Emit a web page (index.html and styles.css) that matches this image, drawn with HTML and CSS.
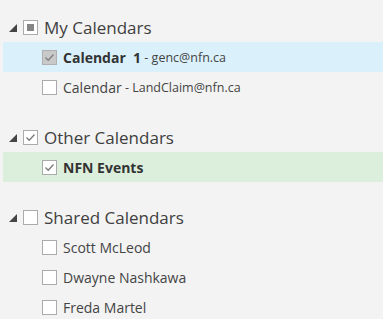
FILE: index.html
```html
<!DOCTYPE html>
<html lang="en">
  <head>
    <meta charset="UTF-8" />
    <title>Calendars</title>
    <link rel="stylesheet" href="styles.css">
  </head>
  <body>
    <div class="tree">
      <div class="section">
        <div class="header">
          <span class="arrow"></span>
          <span class="box partial"><span class="dot"></span></span>
          <span class="title">My Calendars</span>
        </div>
        <div class="item selected">
          <span class="box checked gray">
            <svg viewBox="0 0 13 13"><path d="M2.5 6.5 L5.2 9.3 L10.5 3.5" /></svg>
          </span>
          <span class="name bold">Calendar&nbsp; 1</span>
          <span class="mail">&nbsp;- genc@nfn.ca</span>
        </div>
        <div class="item">
          <span class="box"></span>
          <span class="name">Calendar</span>
          <span class="mail">&nbsp;- LandClaim@nfn.ca</span>
        </div>
      </div>

      <div class="section">
        <div class="header">
          <span class="arrow"></span>
          <span class="box checked">
            <svg viewBox="0 0 13 13"><path d="M2.5 6.5 L5.2 9.3 L10.5 3.5" /></svg>
          </span>
          <span class="title">Other Calendars</span>
        </div>
        <div class="item green">
          <span class="box checked">
            <svg viewBox="0 0 13 13"><path d="M2.5 6.5 L5.2 9.3 L10.5 3.5" /></svg>
          </span>
          <span class="name bold">NFN Events</span>
        </div>
      </div>

      <div class="section">
        <div class="header">
          <span class="arrow"></span>
          <span class="box"></span>
          <span class="title">Shared Calendars</span>
        </div>
        <div class="item">
          <span class="box"></span>
          <span class="name">Scott McLeod</span>
        </div>
        <div class="item">
          <span class="box"></span>
          <span class="name">Dwayne Nashkawa</span>
        </div>
        <div class="item">
          <span class="box"></span>
          <span class="name">Freda Martel</span>
        </div>
      </div>
    </div>
  </body>
</html>
```

FILE: styles.css
```css
body {
  margin: 0;
  padding: 0;
  background-color: #f3f3f3;
  font-family: "Open Sans", "Noto Sans", sans-serif;
  color: #444;
}

.tree {
  padding-top: 12px;
  display: flex;
  flex-direction: column;
  gap: 20px;
}

.header,
.item {
  height: 30px;
  display: flex;
  align-items: center;
}

.header {
  padding-left: 9px;
}

.arrow {
  width: 0;
  height: 0;
  border-style: solid;
  border-width: 0 0 8px 8px;
  border-color: transparent transparent #444 transparent;
  margin-top: 1px;
  margin-right: 6px;
}

.box {
  width: 13px;
  height: 13px;
  border: 1px solid #ababab;
  background-color: #fff;
  display: flex;
  align-items: center;
  justify-content: center;
  flex-shrink: 0;
}

.box svg {
  width: 13px;
  height: 13px;
}

.box path {
  fill: none;
  stroke: #7a7a7a;
  stroke-width: 1.3;
}

.box.gray {
  background-color: #c9c9c9;
  border-color: #b0b0b0;
}

.box.gray path {
  stroke: #808080;
}

.dot {
  width: 7px;
  height: 7px;
  background-color: #858585;
}

.title {
  margin-left: 6px;
  font-size: 17px;
  color: #404040;
}

.item {
  margin-left: 3px;
  padding-left: 39px;
  font-size: 14px;
}

.item .name {
  margin-left: 6px;
}

.item .mail {
  font-size: 12.5px;
}

.bold {
  font-weight: bold;
  color: #333;
}

.selected {
  background-color: #daf0fb;
}

.green {
  background-color: #dcefdd;
}
```
